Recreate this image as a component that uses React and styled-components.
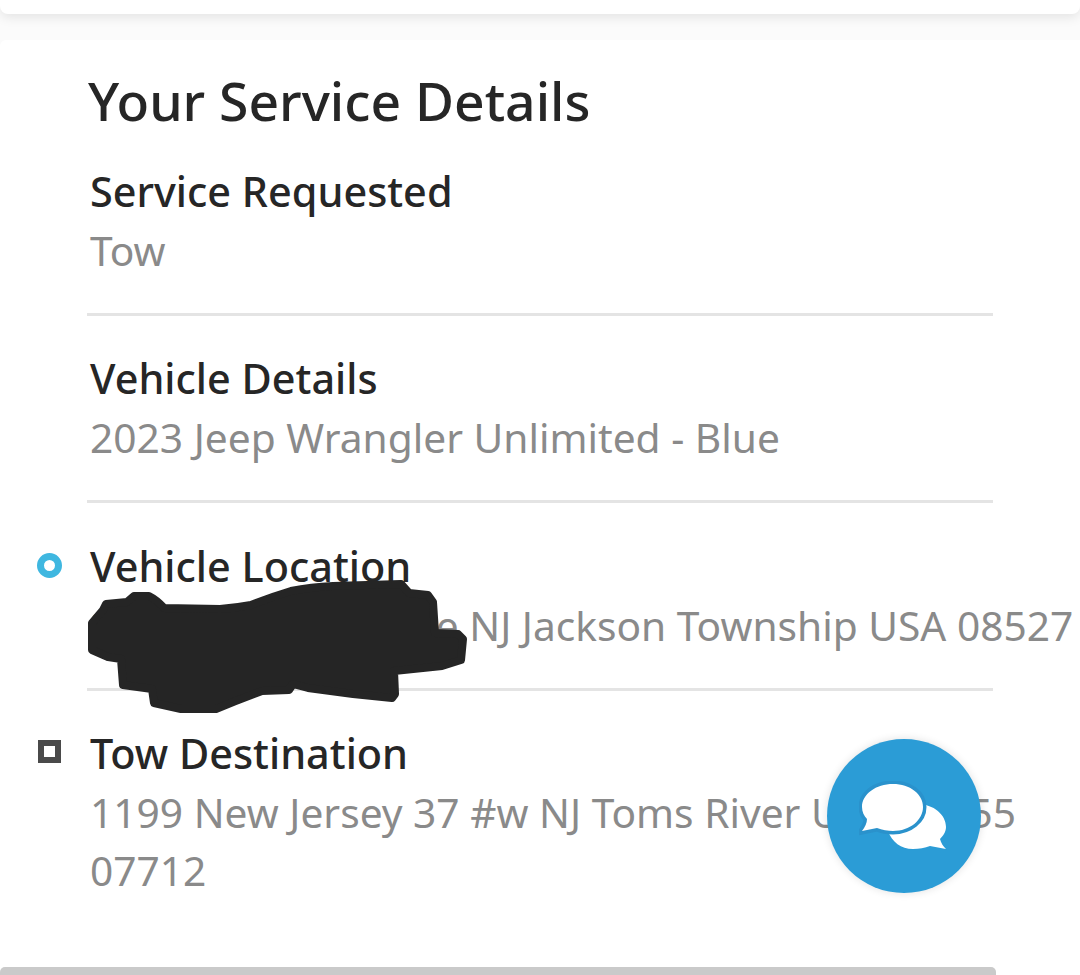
import React from "react"
import styled, { createGlobalStyle } from "styled-components"

const GlobalStyle = createGlobalStyle`
    html, body {
        margin: 0;
        padding: 0;
        background: #fff;
    }
    * {
        box-sizing: border-box;
    }
`

const rows = [
    { label: "Service Requested", value: "Tow" },
    { label: "Vehicle Details", value: "2023 Jeep Wrangler Unlimited - Blue" },
    { label: "Vehicle Location", value: "Street Address Line NJ Jackson Township USA 08527", marker: "circle", nowrap: true },
    { label: "Tow Destination", value: "1199 New Jersey 37 #w NJ Toms River USA 08755 07712", marker: "square" },
]

const App = () => {
    return (
        <Page>
            <GlobalStyle />
            <TopBar />
            <Card>
                <Title>Your Service Details</Title>
                {rows.map((row, i) => (
                    <Row key={row.label} last={i === rows.length - 1}>
                        <MarkerCell>
                            {row.marker === "circle" && <CircleMarker />}
                            {row.marker === "square" && <SquareMarker />}
                        </MarkerCell>
                        <RowBody>
                            <Label>{row.label}</Label>
                            <Value nowrap={row.nowrap}>{row.value}</Value>
                        </RowBody>
                    </Row>
                ))}
            </Card>
            <Redaction />
            <ChatButton aria-label="Chat">
                <ChatIcon />
            </ChatButton>
            <BottomBar />
        </Page>
    )
}

export default App

const Redaction = () => (
    <Scribble viewBox="85 578 384 137" aria-hidden="true">
        <path
            d="M92 623 L103 610 L106 604 L127 602 L134 596 L149 596 Q157 600 164 608 L220 609 Q235 608 251 605 Q271 597 291 591 Q311 587 333 586 L401 584 L409 593 L428 595 L433 602 L435 633 L458 634 L463 639 L461 660 L442 666 L394 671 L395 694 L392 698 L353 694 L308 688 L293 684 L289 690 L262 691 Q240 699 216 709 L181 709 L154 703 L152 689 L123 685 L121 659 L108 657 L92 650 Z"
            fill="#252525"
            stroke="#252525"
            strokeWidth="8"
            strokeLinejoin="round"
        />
    </Scribble>
)

const ChatIcon = () => (
    <svg width="90" height="70" viewBox="859 780 90 70" aria-hidden="true">
        <path
            d="M888 830 C890 812 905 803 917 803 C934 803 946 814 946 826 C946 831 943 835 940 838 C941 842 943 845 946 848 L930 845 C925 847 919 848 913 848 C901 848 892 841 888 830 Z"
            fill="#fff"
        />
        <path
            d="M893 783 C910 783 923 793 923 806 C923 819 910 830 893 830 C888 830 882 829 877 827 L862 830 C865 826 867 822 867 818 C864 815 862 811 862 806 C862 793 876 783 893 783 Z"
            fill="#fff"
            stroke="#2a92cc"
            strokeWidth="7"
            paintOrder="stroke"
        />
    </svg>
)

const Page = styled.div`
    position: relative;
    width: 1080px;
    height: 975px;
    overflow: hidden;
    background: #fbfbfb;
    font-family: "Noto Sans", "Open Sans", sans-serif;
`

const TopBar = styled.div`
    height: 14px;
    background: #fff;
    border-radius: 0 0 8px 8px;
    box-shadow: 0 3px 12px rgba(0, 0, 0, 0.1);
`

const Card = styled.main`
    position: relative;
    height: 935px;
    margin-top: 26px;
    background: #fff;
    border-radius: 6px 0 0 0;
    padding-top: 27px;
`

const Title = styled.h1`
    margin: 0 0 30px 88px;
    font-size: 53.4px;
    line-height: 68px;
    font-weight: 500;
    color: #262626;
`

const Row = styled.section`
    position: relative;
    display: grid;
    grid-template-columns: 90px 1fr;
    padding-bottom: ${props => (props.last ? "0" : "37px")};
    margin-bottom: ${props => (props.last ? "0" : "36.4px")};

    &::after {
        content: "";
        display: ${props => (props.last ? "none" : "block")};
        position: absolute;
        left: 87px;
        bottom: 0;
        width: 906px;
        height: 3px;
        background: #e4e4e4;
    }
`

const MarkerCell = styled.div`
    padding: 13px 0 0 37px;
`

const CircleMarker = styled.div`
    width: 25px;
    height: 25px;
    border-radius: 50%;
    border: 7px solid #3fb7e0;
    background: #fff;
`

const SquareMarker = styled.div`
    width: 23px;
    height: 23px;
    margin-left: 1px;
    border: 6px solid #4a4a4a;
    background: #fff;
`

const RowBody = styled.div`
    min-width: 0;
`

const Label = styled.h2`
    margin: 0;
    font-size: 41.4px;
    line-height: 52px;
    font-weight: 500;
    color: #262626;
`

const Value = styled.p`
    margin: 4px 0 0;
    padding-right: ${props => (props.nowrap ? "0" : "40px")};
    font-size: 40.7px;
    line-height: 58px;
    font-weight: 400;
    color: #8a8a8a;
    white-space: ${props => (props.nowrap ? "nowrap" : "normal")};
`

const Scribble = styled.svg`
    position: absolute;
    left: 85px;
    top: 578px;
    width: 384px;
    height: 137px;
`

const ChatButton = styled.button`
    position: absolute;
    left: 827px;
    top: 739px;
    width: 154px;
    height: 154px;
    padding: 0;
    display: flex;
    align-items: center;
    justify-content: center;
    border: none;
    border-radius: 50%;
    background: #2b9cd6;
    box-shadow: 0 0 8px rgba(0, 0, 0, 0.12);
`

const BottomBar = styled.div`
    position: absolute;
    left: 0;
    bottom: 0;
    width: 996px;
    height: 8px;
    background: #cacaca;
    border-radius: 5px 5px 0 0;
`
